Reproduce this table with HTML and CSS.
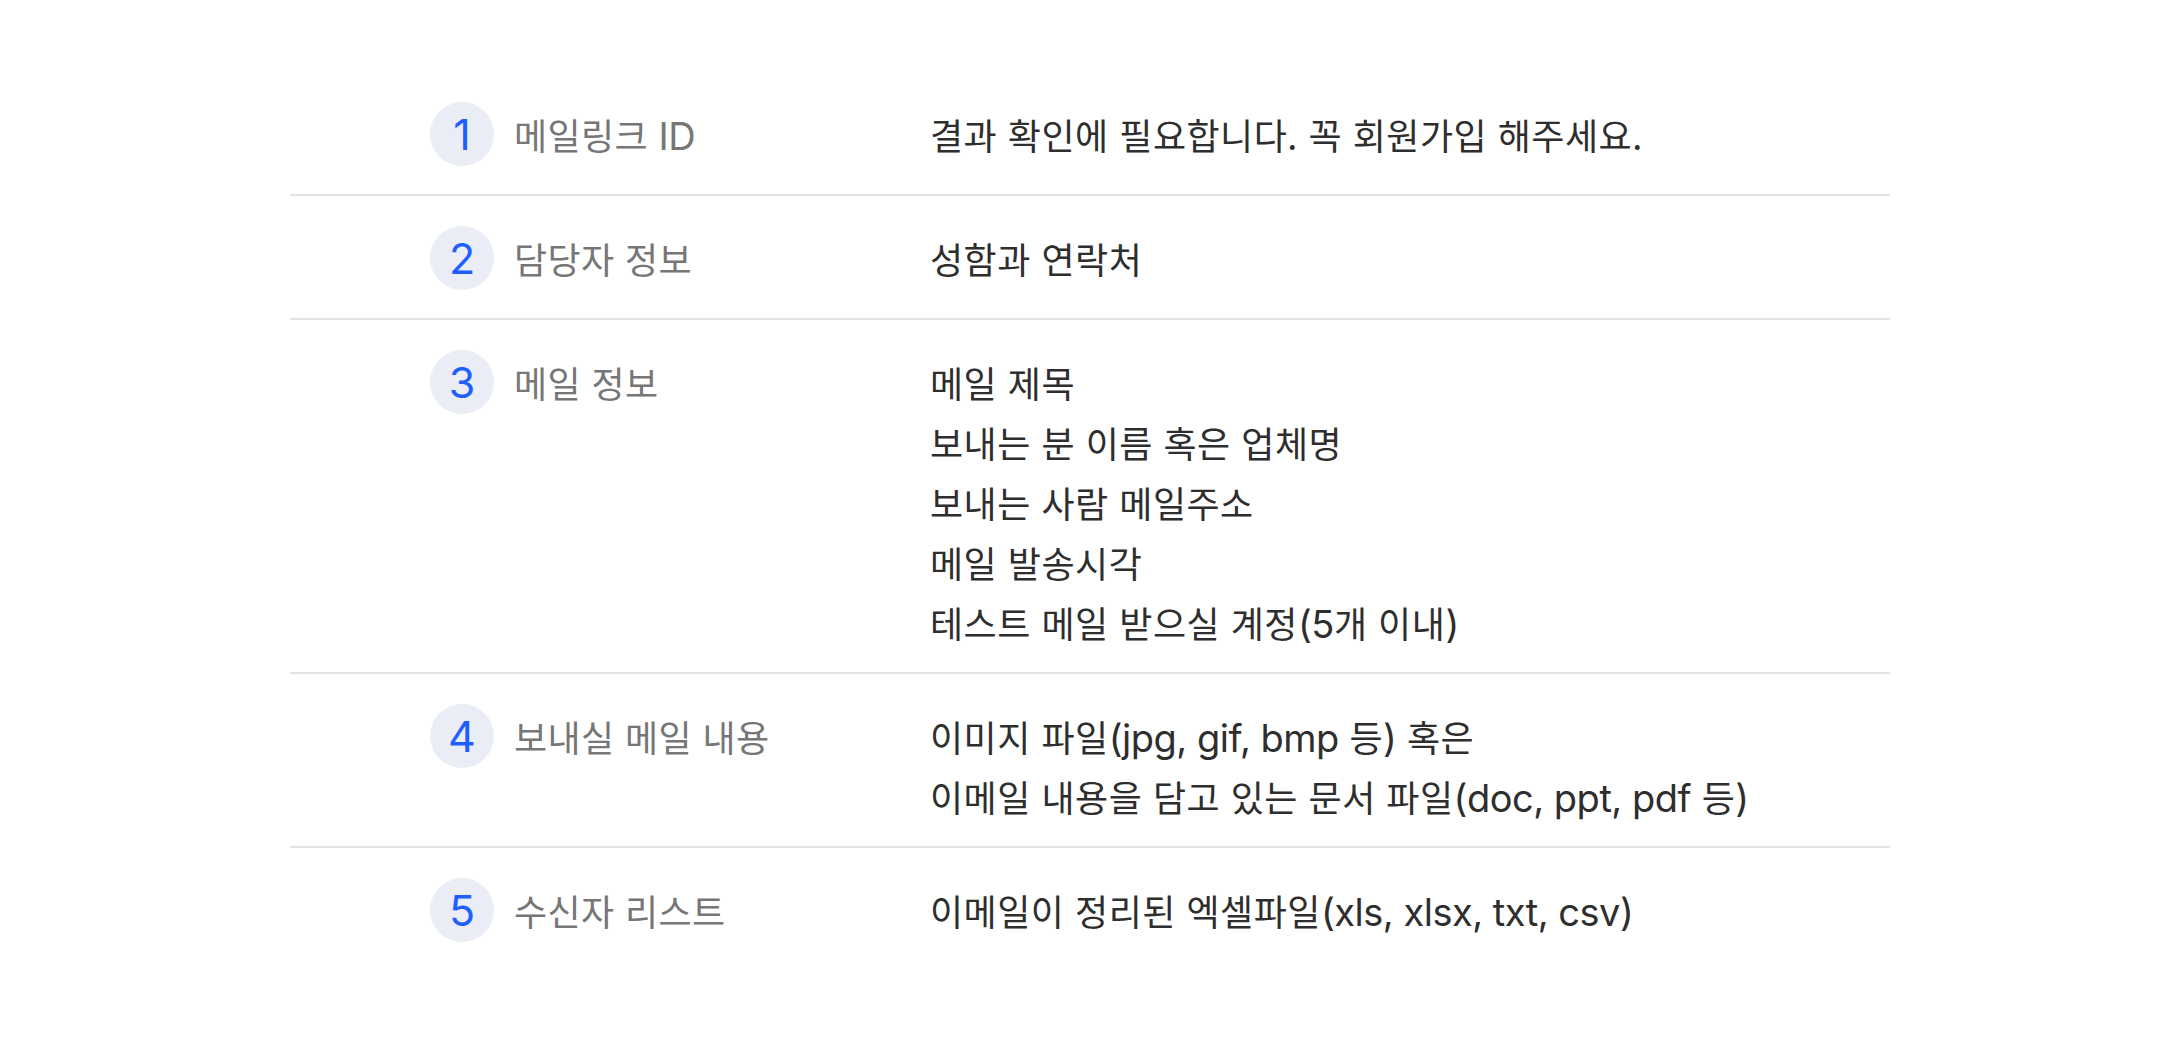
FILE: index.html
```html
<!DOCTYPE html>
<html lang="ko">
<head>
<meta charset="utf-8">
<title>준비물 안내</title>
<link rel="stylesheet" href="styles.css">
</head>
<body>
<main class="steps">
  <section class="step">
    <div class="step-head"><span class="num">1</span><span class="label">메일링크 <span class="en">ID</span></span></div>
    <div class="step-body"><p>결과 확인에 필요합니다. 꼭 회원가입 해주세요.</p></div>
  </section>
  <section class="step">
    <div class="step-head"><span class="num">2</span><span class="label">담당자 정보</span></div>
    <div class="step-body"><p>성함과 연락처</p></div>
  </section>
  <section class="step">
    <div class="step-head"><span class="num">3</span><span class="label">메일 정보</span></div>
    <div class="step-body">
      <p>메일 제목</p>
      <p>보내는 분 이름 혹은 업체명</p>
      <p>보내는 사람 메일주소</p>
      <p>메일 발송시각</p>
      <p>테스트 메일 받으실 계정<span class="en">(5</span>개 이내<span class="en">)</span></p>
    </div>
  </section>
  <section class="step">
    <div class="step-head"><span class="num">4</span><span class="label">보내실 메일 내용</span></div>
    <div class="step-body">
      <p>이미지 파일<span class="en">(jpg, gif, bmp</span> 등<span class="en">)</span> 혹은</p>
      <p>이메일 내용을 담고 있는 문서 파일<span class="en">(doc, ppt, pdf</span> 등<span class="en">)</span></p>
    </div>
  </section>
  <section class="step">
    <div class="step-head"><span class="num">5</span><span class="label">수신자 리스트</span></div>
    <div class="step-body"><p>이메일이 정리된 엑셀파일<span class="en">(xls, xlsx, txt, csv)</span></p></div>
  </section>
</main>
</body>
</html>
```

FILE: styles.css
```css
html, body {
  margin: 0;
  padding: 0;
  background: #ffffff;
}

body {
  font-family: "Noto Sans CJK KR", "Noto Sans", sans-serif;
}

.steps {
  width: 1600px;
  margin: 72px auto 0;
}

.step {
  display: grid;
  grid-template-columns: 500px 1fr;
  padding: 30px 0 20px 140px;
  border-bottom: 2px solid #e2e2e2;
}

.step:last-child {
  border-bottom: none;
}

.step-head {
  display: flex;
  align-items: center;
  gap: 20px;
  height: 64px;
  margin-bottom: 8px;
}

.num {
  flex: 0 0 64px;
  width: 64px;
  height: 64px;
  border-radius: 50%;
  background: #eaedf5;
  color: #1f5fff;
  font-family: "Inter", "Liberation Sans", sans-serif;
  font-size: 43px;
  line-height: 64px;
  display: flex;
  align-items: center;
  justify-content: center;
}

.label {
  color: #767676;
  font-size: 36px;
  letter-spacing: 0.4px;
  line-height: 64px;
  white-space: nowrap;
}

.step-body {
  padding-top: 2px;
  color: #2e2e2e;
  font-size: 36px;
  letter-spacing: 0.5px;
  line-height: 60px;
}

.step-body p {
  margin: 0;
  white-space: nowrap;
}

.en {
  font-family: "Inter", "Liberation Sans", sans-serif;
  font-size: 38px;
  letter-spacing: -0.5px;
  line-height: 1;
}
```
